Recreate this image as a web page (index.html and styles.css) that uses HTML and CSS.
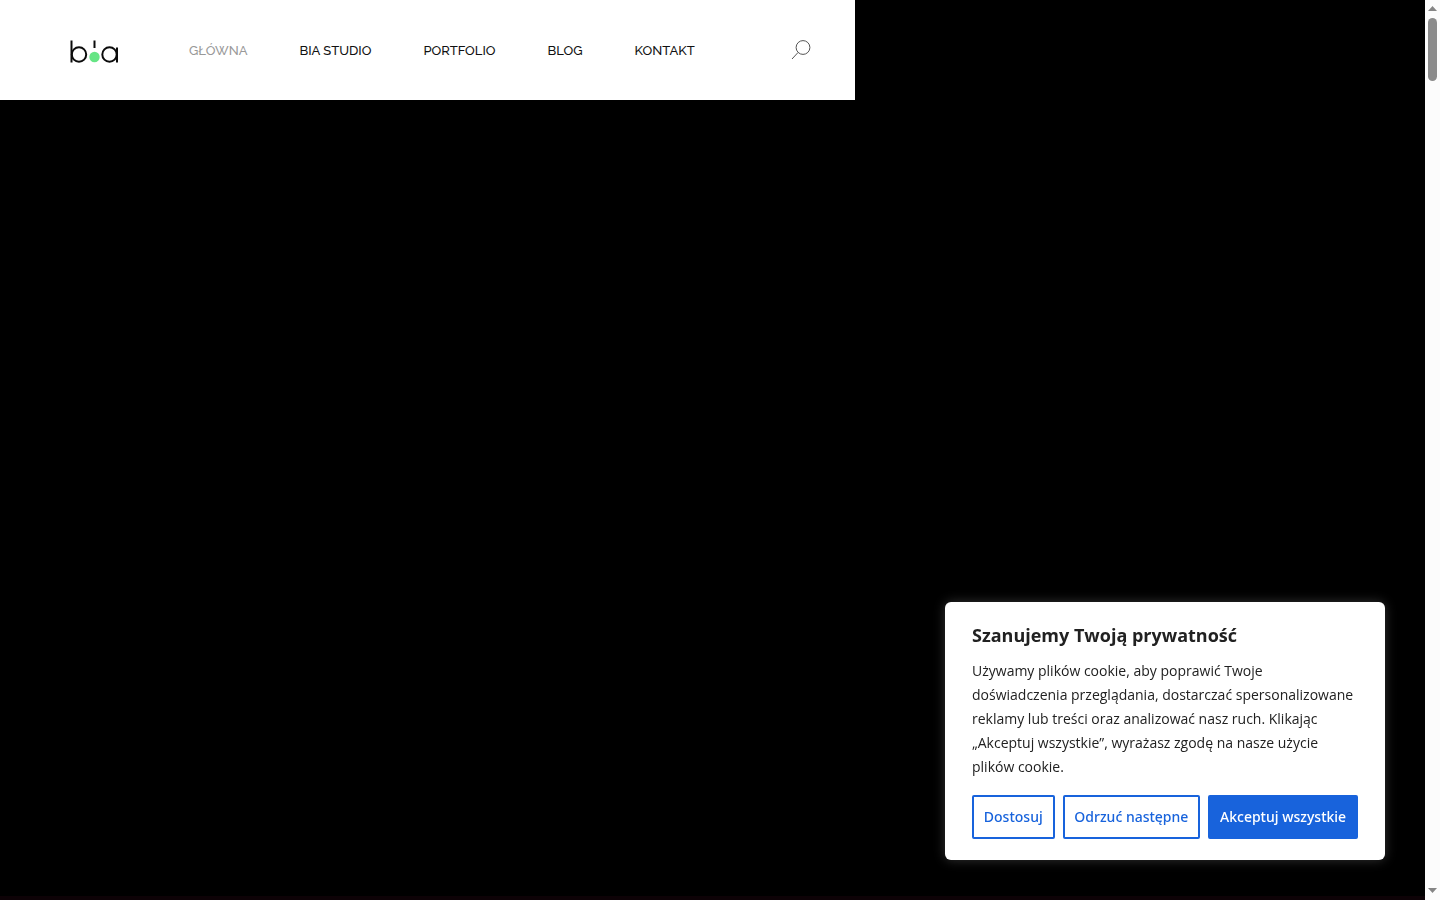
FILE: index.html
```html
<!doctype html>
<html lang="pl">
  <head>
    <meta charset="UTF-8" />
    <meta name="viewport" content="width=device-width, initial-scale=1" />
    <title>BIA Studio</title>
    <link rel="stylesheet" href="styles.css">
  </head>
  <body>
    <div class="page">
      <header class="header">
        <a class="logo" href="#" aria-label="BIA Studio">
          <svg width="50" height="26" viewBox="0 0 50 26" fill="none" stroke="#0c0c0c" stroke-width="2">
            <path d="M2.5 2.5V24.5M25.5 2.5V10M48 9.5V24.5" />
            <circle cx="10" cy="16.5" r="7.2" />
            <circle cx="40.5" cy="16.5" r="7.2" />
            <circle cx="25.5" cy="19" r="5.2" fill="#66e585" stroke="none" />
          </svg>
        </a>
        <nav class="menu">
          <a class="menu-link active" href="#">GŁÓWNA</a>
          <a class="menu-link" href="#">BIA STUDIO</a>
          <a class="menu-link" href="#">PORTFOLIO</a>
          <a class="menu-link" href="#">BLOG</a>
          <a class="menu-link" href="#">KONTAKT</a>
        </nav>
        <button class="search-btn" type="button" aria-label="Szukaj">
          <svg width="20" height="22" viewBox="0 0 20 22" fill="none" stroke="#555" stroke-width="1">
            <circle cx="12" cy="7.5" r="6.9" />
            <path d="M7 12.5L1 19" />
          </svg>
        </button>
      </header>
      <main class="hero"></main>
    </div>

    <div class="scrollbar" aria-hidden="true">
      <svg class="arrow" width="9" height="5" viewBox="0 0 9 5"><path d="M0 5L4.5 0L9 5Z" fill="#858585" /></svg>
      <div class="track"><div class="thumb"></div></div>
      <svg class="arrow" width="9" height="5" viewBox="0 0 9 5"><path d="M0 0L4.5 5L9 0Z" fill="#858585" /></svg>
    </div>

    <section class="cookie" aria-labelledby="cookie-title">
      <h2 class="cookie-title" id="cookie-title">Szanujemy Twoją prywatność</h2>
      <p class="cookie-text">
        Używamy plików cookie, aby poprawić Twoje doświadczenia przeglądania,
        dostarczać spersonalizowane reklamy lub treści oraz analizować nasz
        ruch. Klikając „Akceptuj wszystkie”, wyrażasz zgodę na nasze użycie
        plików cookie.
      </p>
      <div class="cookie-actions">
        <button class="cookie-btn" type="button">Dostosuj</button>
        <button class="cookie-btn" type="button">Odrzuć następne</button>
        <button class="cookie-btn accept" type="button">Akceptuj wszystkie</button>
      </div>
    </section>
  </body>
</html>
```
FILE: styles.css
```css
:root {
  --blue: #1863dc;
  --text: #212121;
}

* {
  box-sizing: border-box;
}

body {
  margin: 0;
  min-height: 100vh;
  display: flex;
  background: #000;
  color: var(--text);
  font-family: "Open Sans", sans-serif;
}

.page {
  flex: 1;
  display: flex;
  flex-direction: column;
}

.header {
  width: 60%;
  height: 100px;
  padding: 1px 44px 0 69px;
  display: flex;
  align-items: center;
  background: #fff;
}

.logo {
  display: flex;
  margin-right: 70px;
}

.menu {
  display: flex;
  gap: 52px;
}

.menu-link {
  color: #111;
  font-family: Raleway, Lato, sans-serif;
  font-size: 13px;
  font-weight: 500;
  line-height: 26px;
  text-decoration: none;
  white-space: nowrap;
}

.menu-link.active {
  color: #999;
}

.search-btn {
  display: flex;
  margin-left: auto;
  padding: 0;
  border: none;
  background: none;
  cursor: pointer;
}

.hero {
  flex: 1;
  border-bottom: 4px solid #0d0206;
}

/* scrollbar */
.scrollbar {
  width: 15px;
  height: 100vh;
  padding: 6px 0 7px;
  display: flex;
  flex-direction: column;
  align-items: center;
  gap: 7px;
  position: sticky;
  top: 0;
  background: #fcfcfc;
}

.arrow {
  flex: none;
}

.track {
  flex: 1;
}

.thumb {
  width: 9px;
  height: 63px;
  border-radius: 5px;
  background: #8b8b8b;
}

/* cookie banner */
.cookie {
  position: fixed;
  right: 55px;
  bottom: 40px;
  width: 440px;
  padding: 20px 27px 21px;
  border-radius: 6px;
  background: #fff;
  box-shadow: 0 0 12px rgba(172, 171, 171, 0.3);
}

.cookie-title {
  margin: 0 0 10px;
  font-size: 18px;
  line-height: 27px;
}

.cookie-text {
  margin: 0 0 16px;
  font-size: 14px;
  line-height: 24px;
}

.cookie-actions {
  display: flex;
  gap: 8px;
}

.cookie-btn {
  flex: auto;
  height: 44px;
  padding: 0 9px 2px;
  border: 2px solid var(--blue);
  border-radius: 2px;
  background: #fff;
  color: var(--blue);
  font-family: "Noto Sans", "Open Sans", sans-serif;
  font-size: 14px;
  font-weight: 500;
  white-space: nowrap;
  cursor: pointer;
}

.cookie-btn.accept {
  background: var(--blue);
  color: #fff;
}
```
